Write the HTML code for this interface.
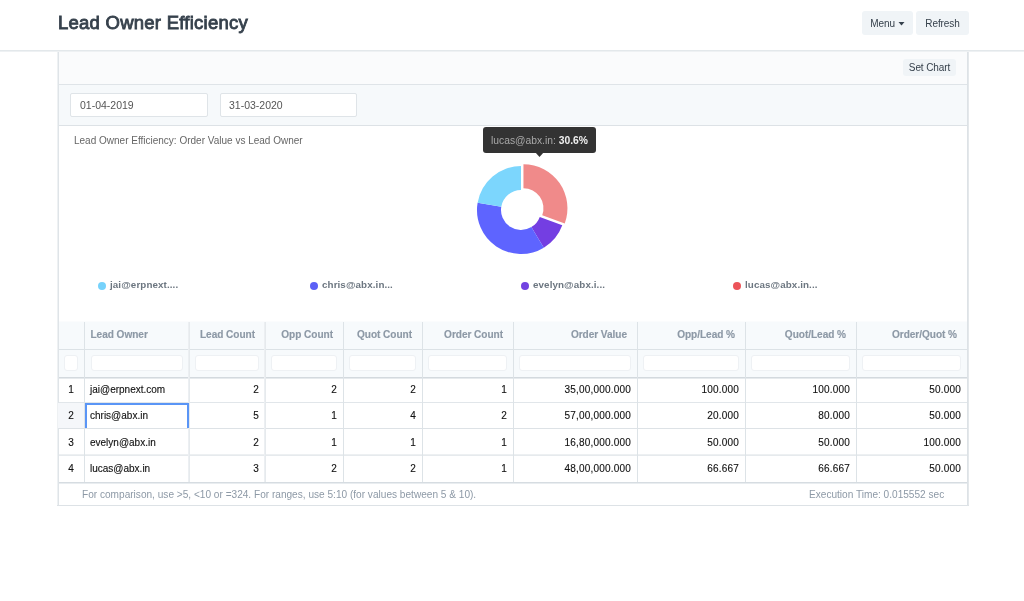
<!DOCTYPE html>
<html><head><meta charset="utf-8">
<style>
*{box-sizing:border-box;margin:0;padding:0}
html,body{width:1024px;height:601px;overflow:hidden;background:#fff}
body{position:relative;will-change:transform;font-family:"Liberation Sans",sans-serif;color:#36414c}
.a{position:absolute;white-space:nowrap}
.ln{position:absolute}
.title{left:58px;top:11px;font-size:18.5px;font-weight:400;line-height:24px;color:#36414c;-webkit-text-stroke:0.85px #36414c;letter-spacing:0.25px}
.btn{background:#f0f4f7;border-radius:3px;font-size:10px;letter-spacing:-0.1px;line-height:23px;text-align:center;color:#36414c}
.inp{background:#fff;border:1px solid #dfe4e8;border-radius:2px;font-size:10.5px;line-height:22px;color:#555;padding-left:9px}
.ctitle{left:74px;top:135px;font-size:10px;line-height:12px;color:#666}
.tip{left:483px;top:127px;width:113px;height:26px;background:#333;border-radius:3px;font-size:10.3px;line-height:27px;color:#a8a8a8;padding-left:8px}
.tip b{color:#f0f0f0}
.leg{font-size:9.8px;font-weight:700;color:#6c7680;line-height:12px;top:278.5px;letter-spacing:0.1px}
.dot{width:8px;height:8px;border-radius:50%;top:282px}
.th{font-size:10.1px;font-weight:700;color:#8d99a6;line-height:12px;top:328.8px;letter-spacing:-0.05px;-webkit-text-stroke:0.15px #8d99a6}
.td{font-size:10px;color:#111;line-height:12px;-webkit-text-stroke:0.12px #111}
.r{text-align:right}
.foot{font-size:10.1px;color:#8d99a6;line-height:12px;top:489px}
</style></head><body>
<div class="ln" style="left:0px;top:50px;width:1024px;height:1px;background:#e3e8eb"></div>
<div class="ln" style="left:0px;top:51px;width:1024px;height:1px;background:#eef1f3"></div>
<div class="a title">Lead Owner Efficiency</div>
<div class="a btn" style="left:862px;top:11px;width:51px;height:24px;line-height:24px;padding-top:1px">Menu <svg width="7" height="4" viewBox="0 0 7 4" style="vertical-align:1px"><path d="M0.5 0H6.5L3.5 3.5Z" fill="#36414c"/></svg></div>
<div class="a btn" style="left:916px;top:11px;width:53px;height:24px;line-height:24px;padding-top:1px">Refresh</div>
<div class="ln" style="left:59px;top:52px;width:908px;height:32px;background:#fafbfc"></div>
<div class="ln" style="left:59px;top:84px;width:908px;height:1px;background:#dfe4e8"></div>
<div class="ln" style="left:59px;top:85px;width:908px;height:40px;background:#f6f9fb"></div>
<div class="ln" style="left:59px;top:125px;width:908px;height:1px;background:#dde2e6"></div>
<div class="ln" style="left:57px;top:52px;width:1px;height:454px;background:#eef1f3"></div>
<div class="ln" style="left:58px;top:52px;width:1px;height:454px;background:#dfe4e8"></div>
<div class="ln" style="left:967px;top:52px;width:1px;height:454px;background:#dde2e6"></div>
<div class="ln" style="left:968px;top:52px;width:1px;height:454px;background:#e4e8eb"></div>
<div class="ln" style="left:57px;top:505px;width:912px;height:1px;background:#dde2e6"></div>
<div class="a btn" style="left:903px;top:59px;width:53px;height:17px;line-height:17px;font-size:10px">Set Chart</div>
<div class="a inp" style="left:70px;top:93px;width:138px;height:24px">01-04-2019</div>
<div class="a inp" style="left:220px;top:93px;width:137px;height:24px;padding-left:8px">31-03-2020</div>
<div class="a ctitle">Lead Owner Efficiency: Order Value vs Lead Owner</div>
<div class="a tip">lucas@abx.in: <b>30.6%</b></div>
<svg class="a" style="left:535px;top:152px" width="9" height="6" viewBox="0 0 9 6"><path d="M0 0H9L4.5 5Z" fill="#333"/></svg>
<svg class="a" style="left:0;top:0" width="1024" height="601" viewBox="0 0 1024 601"><path d="M523.46 164.28A44.0 44.0 0 0 1 564.75 223.48L542.23 215.19A20.0 20.0 0 0 0 523.46 188.28Z" fill="#f08a8a"/><path d="M562.29 225.20A44.0 44.0 0 0 1 543.81 247.63L531.37 227.10A20.0 20.0 0 0 0 539.77 216.91Z" fill="#743ee2"/><path d="M543.81 247.63A44.0 44.0 0 0 1 477.62 202.63L501.28 206.65A20.0 20.0 0 0 0 531.37 227.10Z" fill="#5e64ff"/><path d="M477.62 202.63A44.0 44.0 0 0 1 521.00 166.00L521.00 190.00A20.0 20.0 0 0 0 501.28 206.65Z" fill="#7cd6fd"/></svg>
<div class="a dot" style="left:98px;background:#76d2fb"></div>
<div class="a leg" style="left:110px">jai@erpnext....</div>
<div class="a dot" style="left:310px;background:#5b60f6"></div>
<div class="a leg" style="left:322px">chris@abx.in...</div>
<div class="a dot" style="left:521px;background:#7243e1"></div>
<div class="a leg" style="left:533px">evelyn@abx.i...</div>
<div class="a dot" style="left:732.5px;background:#ec5459"></div>
<div class="a leg" style="left:745px">lucas@abx.in...</div>
<div class="ln" style="left:59px;top:322px;width:908px;height:55px;background:#f7fafc"></div>
<div class="ln" style="left:59px;top:321px;width:908px;height:1px;background:#fbfcfd"></div>
<div class="ln" style="left:59px;top:349px;width:908px;height:1px;background:#dce2e6"></div>
<div class="ln" style="left:59px;top:377px;width:908px;height:1px;background:#d3d9de"></div>
<div class="ln" style="left:59px;top:378px;width:908px;height:1px;background:#e6eaed"></div>
<div class="ln" style="left:58px;top:403px;width:26px;height:25px;background:#f5f7fa"></div>
<div class="ln" style="left:59px;top:402px;width:908px;height:1px;background:#e1e6ea"></div>
<div class="ln" style="left:59px;top:428px;width:908px;height:1px;background:#dde2e6"></div>
<div class="ln" style="left:59px;top:454px;width:908px;height:1px;background:#edf0f2"></div>
<div class="ln" style="left:59px;top:455px;width:908px;height:1px;background:#e6eaed"></div>
<div class="ln" style="left:59px;top:482px;width:908px;height:1px;background:#d6dce1"></div>
<div class="ln" style="left:59px;top:483px;width:908px;height:1px;background:#e9edf0"></div>
<div class="ln" style="left:84px;top:322px;width:1px;height:160px;background:#dde3e7"></div>
<div class="ln" style="left:188px;top:322px;width:1px;height:160px;background:#eceff2"></div>
<div class="ln" style="left:189px;top:322px;width:1px;height:160px;background:#e6eaed"></div>
<div class="ln" style="left:264px;top:322px;width:1px;height:160px;background:#eceff2"></div>
<div class="ln" style="left:265px;top:322px;width:1px;height:160px;background:#e6eaed"></div>
<div class="ln" style="left:343px;top:322px;width:1px;height:160px;background:#dde3e7"></div>
<div class="ln" style="left:422px;top:322px;width:1px;height:160px;background:#dde3e7"></div>
<div class="ln" style="left:513px;top:322px;width:1px;height:160px;background:#dde3e7"></div>
<div class="ln" style="left:637px;top:322px;width:1px;height:160px;background:#dde3e7"></div>
<div class="ln" style="left:745px;top:322px;width:1px;height:160px;background:#dde3e7"></div>
<div class="ln" style="left:856px;top:322px;width:1px;height:160px;background:#dde3e7"></div>
<div class="a th" style="left:90.5px">Lead Owner</div>
<div class="a th r" style="left:189px;width:66px">Lead Count</div>
<div class="a th r" style="left:265px;width:68px">Opp Count</div>
<div class="a th r" style="left:343px;width:69px">Quot Count</div>
<div class="a th r" style="left:422px;width:81px">Order Count</div>
<div class="a th r" style="left:513px;width:114px">Order Value</div>
<div class="a th r" style="left:637px;width:98px">Opp/Lead %</div>
<div class="a th r" style="left:745px;width:101px">Quot/Lead %</div>
<div class="a th r" style="left:856px;width:101px">Order/Quot %</div>
<div class="ln" style="left:64px;top:355px;width:14px;height:16px;background:#fff;border:1px solid #eef1f4;border-radius:3px"></div>
<div class="ln" style="left:91px;top:355px;width:92px;height:16px;background:#fff;border:1px solid #eef1f4;border-radius:3px"></div>
<div class="ln" style="left:195px;top:355px;width:64px;height:16px;background:#fff;border:1px solid #eef1f4;border-radius:3px"></div>
<div class="ln" style="left:271px;top:355px;width:66px;height:16px;background:#fff;border:1px solid #eef1f4;border-radius:3px"></div>
<div class="ln" style="left:349px;top:355px;width:67px;height:16px;background:#fff;border:1px solid #eef1f4;border-radius:3px"></div>
<div class="ln" style="left:428px;top:355px;width:79px;height:16px;background:#fff;border:1px solid #eef1f4;border-radius:3px"></div>
<div class="ln" style="left:519px;top:355px;width:112px;height:16px;background:#fff;border:1px solid #eef1f4;border-radius:3px"></div>
<div class="ln" style="left:643px;top:355px;width:96px;height:16px;background:#fff;border:1px solid #eef1f4;border-radius:3px"></div>
<div class="ln" style="left:751px;top:355px;width:99px;height:16px;background:#fff;border:1px solid #eef1f4;border-radius:3px"></div>
<div class="ln" style="left:862px;top:355px;width:99px;height:16px;background:#fff;border:1px solid #eef1f4;border-radius:3px"></div>
<div class="ln" style="left:85px;top:403px;width:104px;height:25px;border:2px solid #5a95f6;border-bottom:0"></div>
<div class="a td" style="left:58px;width:26px;text-align:center;top:383.5px">1</div>
<div class="a td" style="left:90px;top:383.5px">jai@erpnext.com</div>
<div class="a td r" style="left:189px;width:70px;top:383.5px;letter-spacing:0.2px">2</div>
<div class="a td r" style="left:265px;width:72px;top:383.5px;letter-spacing:0.2px">2</div>
<div class="a td r" style="left:343px;width:73px;top:383.5px;letter-spacing:0.2px">2</div>
<div class="a td r" style="left:422px;width:85px;top:383.5px;letter-spacing:0.2px">1</div>
<div class="a td r" style="left:513px;width:118px;top:383.5px;letter-spacing:0.2px">35,00,000.000</div>
<div class="a td r" style="left:637px;width:102px;top:383.5px;letter-spacing:0.2px">100.000</div>
<div class="a td r" style="left:745px;width:105px;top:383.5px;letter-spacing:0.2px">100.000</div>
<div class="a td r" style="left:856px;width:105px;top:383.5px;letter-spacing:0.2px">50.000</div>
<div class="a td" style="left:58px;width:26px;text-align:center;top:410.0px">2</div>
<div class="a td" style="left:90px;top:410.0px">chris@abx.in</div>
<div class="a td r" style="left:189px;width:70px;top:410.0px;letter-spacing:0.2px">5</div>
<div class="a td r" style="left:265px;width:72px;top:410.0px;letter-spacing:0.2px">1</div>
<div class="a td r" style="left:343px;width:73px;top:410.0px;letter-spacing:0.2px">4</div>
<div class="a td r" style="left:422px;width:85px;top:410.0px;letter-spacing:0.2px">2</div>
<div class="a td r" style="left:513px;width:118px;top:410.0px;letter-spacing:0.2px">57,00,000.000</div>
<div class="a td r" style="left:637px;width:102px;top:410.0px;letter-spacing:0.2px">20.000</div>
<div class="a td r" style="left:745px;width:105px;top:410.0px;letter-spacing:0.2px">80.000</div>
<div class="a td r" style="left:856px;width:105px;top:410.0px;letter-spacing:0.2px">50.000</div>
<div class="a td" style="left:58px;width:26px;text-align:center;top:436.5px">3</div>
<div class="a td" style="left:90px;top:436.5px">evelyn@abx.in</div>
<div class="a td r" style="left:189px;width:70px;top:436.5px;letter-spacing:0.2px">2</div>
<div class="a td r" style="left:265px;width:72px;top:436.5px;letter-spacing:0.2px">1</div>
<div class="a td r" style="left:343px;width:73px;top:436.5px;letter-spacing:0.2px">1</div>
<div class="a td r" style="left:422px;width:85px;top:436.5px;letter-spacing:0.2px">1</div>
<div class="a td r" style="left:513px;width:118px;top:436.5px;letter-spacing:0.2px">16,80,000.000</div>
<div class="a td r" style="left:637px;width:102px;top:436.5px;letter-spacing:0.2px">50.000</div>
<div class="a td r" style="left:745px;width:105px;top:436.5px;letter-spacing:0.2px">50.000</div>
<div class="a td r" style="left:856px;width:105px;top:436.5px;letter-spacing:0.2px">100.000</div>
<div class="a td" style="left:58px;width:26px;text-align:center;top:462.9px">4</div>
<div class="a td" style="left:90px;top:462.9px">lucas@abx.in</div>
<div class="a td r" style="left:189px;width:70px;top:462.9px;letter-spacing:0.2px">3</div>
<div class="a td r" style="left:265px;width:72px;top:462.9px;letter-spacing:0.2px">2</div>
<div class="a td r" style="left:343px;width:73px;top:462.9px;letter-spacing:0.2px">2</div>
<div class="a td r" style="left:422px;width:85px;top:462.9px;letter-spacing:0.2px">1</div>
<div class="a td r" style="left:513px;width:118px;top:462.9px;letter-spacing:0.2px">48,00,000.000</div>
<div class="a td r" style="left:637px;width:102px;top:462.9px;letter-spacing:0.2px">66.667</div>
<div class="a td r" style="left:745px;width:105px;top:462.9px;letter-spacing:0.2px">66.667</div>
<div class="a td r" style="left:856px;width:105px;top:462.9px;letter-spacing:0.2px">50.000</div>
<div class="a foot" style="left:82px">For comparison, use &gt;5, &lt;10 or =324. For ranges, use 5:10 (for values between 5 &amp; 10).</div>
<div class="a foot" style="left:809px">Execution Time: 0.015552 sec</div>
</body></html>
